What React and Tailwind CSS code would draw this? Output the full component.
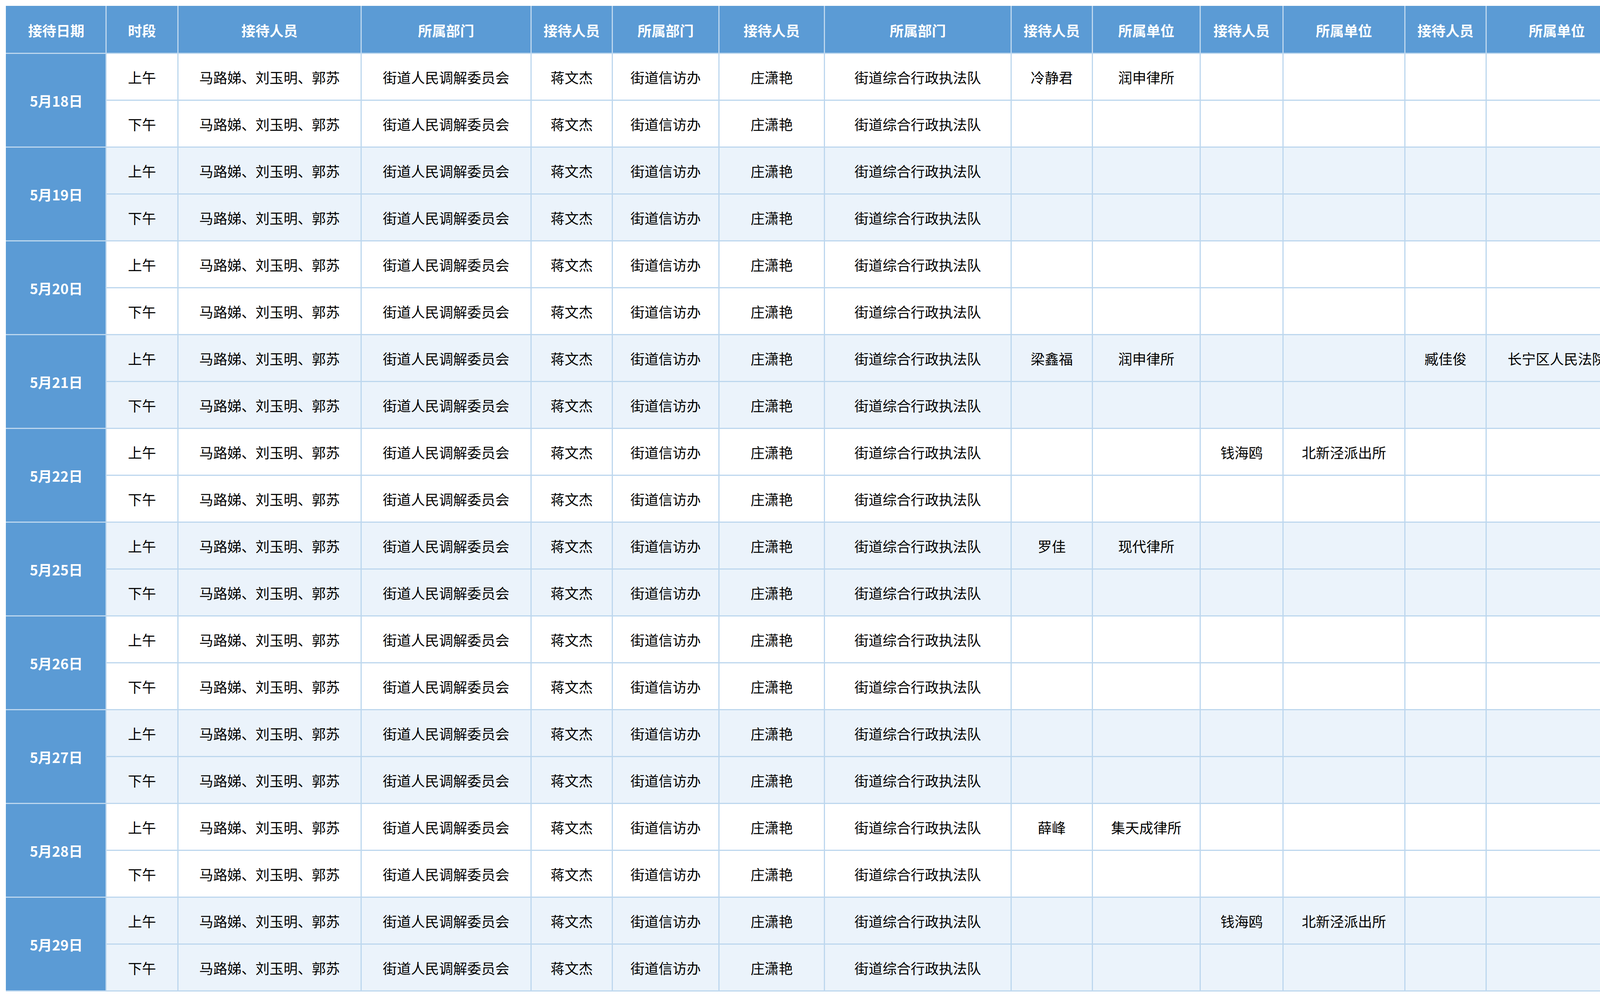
import React from "react";

const widths = [255, 184, 469, 435, 208, 273, 270, 478, 208, 276, 212, 312, 208, 362, 209, 414];
const heads = ["接待日期", "时段", "接待人员", "所属部门", "接待人员", "所属部门", "接待人员", "所属部门", "接待人员", "所属单位", "接待人员", "所属单位", "接待人员", "所属单位", "接待人员", "所属单位"];

const extra = {
  "5月18日": { 0: ["冷静君", "润申律所"] },
  "5月21日": { 0: ["梁鑫福", "润申律所", "", "", "臧佳俊", "长宁区人民法院"] },
  "5月22日": { 0: ["", "", "钱海鸥", "北新泾派出所"] },
  "5月25日": { 0: ["罗佳", "现代律所"] },
  "5月28日": { 0: ["薛峰", "集天成律所", "", "", "", "", "孙辉", "长宁区人民检察院"] },
  "5月29日": { 0: ["", "", "钱海鸥", "北新泾派出所"] },
};

const dates = ["5月18日", "5月19日", "5月20日", "5月21日", "5月22日", "5月25日", "5月26日", "5月27日", "5月28日", "5月29日"];
const base = ["马路娣、刘玉明、郭苏", "街道人民调解委员会", "蒋文杰", "街道信访办", "庄潇艳", "街道综合行政执法队"];

function App() {
  return (
    <div className="w-[4806px] h-[2552px] bg-white p-[15px] overflow-hidden" style={{ fontFamily: '"Noto Sans CJK SC", sans-serif' }}>
      <table className="w-[4773px] table-fixed border-collapse border-[3px] border-[#5b9bd5] text-[36px] leading-none">
        <colgroup>
          {widths.map((w, i) => <col key={i} style={{ width: w }} />)}
        </colgroup>
        <thead>
          <tr>
            {heads.map((h, i) => (
              <th key={i} className="h-[120px] p-0 bg-[#5b9bd5] text-white border-[3px] border-[#bdd7ee] border-t-[#5b9bd5] first:border-l-[#5b9bd5] last:border-r-[#5b9bd5] font-bold">{h}</th>
            ))}
          </tr>
        </thead>
        <tbody>
          {dates.map((d, di) =>
            ["上午", "下午"].map((p, pi) => {
              const ex = (extra[d] && extra[d][pi]) || [];
              const cells = [p, ...base];
              for (let k = 0; k < 8; k++) cells.push(ex[k] || "");
              return (
                <tr key={d + p} className={di % 2 ? "bg-[#ebf3fb]" : "bg-white"}>
                  {pi === 0 && (
                    <td rowSpan={2} className="p-0 bg-[#5b9bd5] text-white font-bold text-center border-[3px] border-[#bdd7ee] border-l-[#5b9bd5]">{d}</td>
                  )}
                  {cells.map((c, i) => (
                    <td key={i} className="h-[120px] p-0 border-[3px] border-[#bdd7ee] text-center text-black whitespace-nowrap overflow-hidden">{c}</td>
                  ))}
                </tr>
              );
            })
          )}
        </tbody>
      </table>
    </div>
  );
}

export default App;
